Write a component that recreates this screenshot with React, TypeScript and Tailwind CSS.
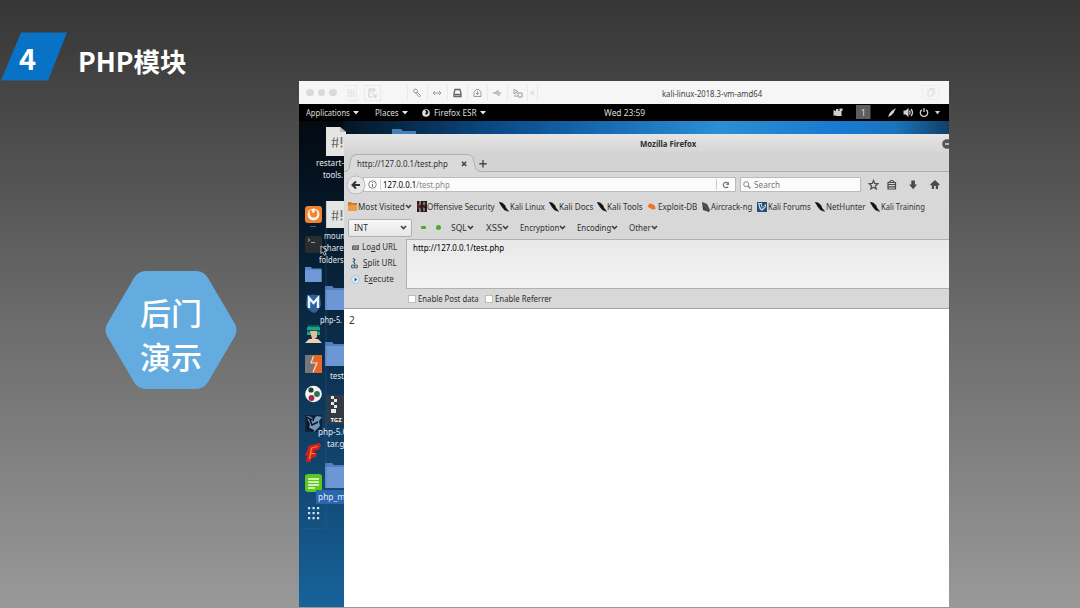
import { useLayoutEffect, useRef, type ReactNode } from "react";

/** Text that is squeezed or stretched to the width of its own box. */
function Fit({ className = "", children }: { className?: string; children: ReactNode }) {
  const outer = useRef<HTMLSpanElement>(null);
  const inner = useRef<HTMLSpanElement>(null);
  useLayoutEffect(() => {
    const fit = () => {
      if (!outer.current || !inner.current) return;
      const ratio = outer.current.clientWidth / inner.current.offsetWidth;
      inner.current.style.transform = `scaleX(${ratio})`;
    };
    fit();
    document.fonts?.ready.then(fit);
  }, []);
  return (
    <span ref={outer} className={`block shrink-0 whitespace-nowrap ${className}`}>
      <span ref={inner} className="inline-block origin-left">
        {children}
      </span>
    </span>
  );
}

function Caret() {
  return (
    <svg className="ml-[3px] h-[4px] w-[6px] shrink-0" viewBox="0 0 6 4">
      <path d="M0 0h6L3 3.600z" fill="#e4e4e4" />
    </svg>
  );
}

function Chevron() {
  return (
    <svg className="h-[5px] w-[7px] shrink-0" viewBox="0 0 7 5">
      <path d="M1 1l2.500 2.600L6 1" fill="none" stroke="#3c3c3c" strokeWidth="1.500" />
    </svg>
  );
}

function VmTitleBar() {
  return (
    <div className="flex h-[23px] shrink-0 items-center bg-[#f6f6f6]">
      <div className="ml-[7px] flex gap-[4px]">
        <i className="size-[7.500px] rounded-full bg-[#dadada]" />
        <i className="size-[7.500px] rounded-full bg-[#dadada]" />
        <i className="size-[7.500px] rounded-full bg-[#dadada]" />
      </div>
      <svg className="ml-[9.500px] h-[18px] w-[200px] shrink-0" viewBox="347 84 200 18" fill="none" stroke="#9a9a9a" strokeWidth="1">
        <g stroke="#eaeaea">
          <path d="M347 85.500h10.500v15H347M365.500 85.500h16v15h-16z" />
          <path d="M408.500 85v16M428.500 85v16M448.500 85v16M468.500 85v16M488.500 85v16M508.500 85v16M528.500 85v16M538.500 85v16" />
        </g>
        <path d="M349 90h6v6h-6zM352 90v6M349 93h6" stroke="#e2e2e2" />
        <path d="M376 90v-1h-6v8h3M371 91h5M373 93l4 4M377 94v3h-3" stroke="#cfcfcf" />
        <path d="M415 89.500l2-.5 1.500 1.500-.5 2-2 .5-1.500-1.500zM418 92l3.500 3.500-1 1.500-4-4" />
        <path d="M434 93h8M436 91l-2 2 2 2M440 91l2 2-2 2" />
        <path d="M455 93.500l1-4h5l1 4v3h-7zM455 94.500h7" stroke="#666" strokeWidth="1.300" />
        <path d="M475 96.500v-4l2-3h3l2 3v4zM477 93.500h3M478.500 91v4M475 96.500h7" />
        <path d="M494 93h8M496 93l2-2h2M498 93l1 2h2" />
        <path d="M515 89.500l4 2.200-4 2.200zM519 93h4v4h-4zM515 96h3" />
        <path d="M535 91l-3 2 3 2" stroke="#cfcfcf" />
      </svg>
      <Fit className="ml-[116px] w-[100px] pt-[2px] font-['Noto_Sans'] text-[9px] leading-[12px] text-[#404040]">
        kali-linux-2018.3-vm-amd64
      </Fit>
      <svg className="ml-[160px] h-[15px] w-[17px] shrink-0" viewBox="0 0 17 15" fill="none">
        <rect x=".5" y=".5" width="16" height="14" rx="1" stroke="#eeeeee" />
        <path d="M6 5h5v6H6zM8 5V3.500h4.500V9" stroke="#dedede" />
      </svg>
    </div>
  );
}

function DesktopPanel() {
  return (
    <div className="flex h-[17px] shrink-0 items-center bg-black font-['Noto_Sans'] text-[9px] leading-[13px] text-[#dcdcdc]">
      <Fit className="ml-[7px] w-[44px]">Applications</Fit>
      <Caret />
      <Fit className="ml-[16px] w-[24px]">Places</Fit>
      <Caret />
      <svg className="ml-[14px] size-[8px] shrink-0" viewBox="0 0 8 8">
        <circle cx="4" cy="4" r="3.800" fill="#dcdcdc" />
        <path d="M3 1c3-.4 4 2 2.600 3.700S2.800 5.300 3.400 4.200L4.200 3z" fill="#111" />
      </svg>
      <Fit className="ml-[4px] w-[43px]">Firefox ESR</Fit>
      <Caret />
      <Fit className="ml-[118px] w-[41px]">Wed 23:59</Fit>
      <svg className="ml-[187px] h-[15px] w-[110px] shrink-0" viewBox="832 105 110 15">
        <g fill="#d0d0d0">
          <path d="M833.500 110l2 1h6v5h-6v-1l-2 1zM836 109h2.500v2H836zM839.500 108.500h3v2.500h-3z" />
          <path d="M888 117l1.500-3.500 2-2.500 4.500-3-2.500 5-2.500 2.500z" />
          <path d="M903.500 110.500h2l3-2.500v9l-3-2.500h-2z" />
          <path d="M935 111h5l-2.500 3.500z" />
        </g>
        <rect x="856" y="105" width="14.500" height="14" fill="#5d5d5d" />
        <path d="M909.500 110.500q1.500 2 0 4M911 109q3 3.500 0 7" fill="none" stroke="#d0d0d0" strokeWidth="1.300" />
        <path d="M921.800 109.800a3.700 3.700 0 1 0 4.400 0M924 108v4" fill="none" stroke="#d0d0d0" strokeWidth="1.300" />
        <text x="863.300" y="115.500" textAnchor="middle" fill="#d8d8d8" fontSize="9" fontFamily="Noto Sans">1</text>
      </svg>
    </div>
  );
}

function Dock() {
  return (
    <svg className="absolute left-0 top-[80px] h-[328px] w-[28px]" viewBox="299 201 28 328">
      <path d="M299 528.500h27v-327" fill="none" stroke="#2e5f8c" opacity=".4" />
      <rect x="305" y="206" width="17" height="17" rx="3" fill="#ee8331" />
      <circle cx="313.500" cy="214.500" r="6" fill="#fff1df" />
      <path d="M309.500 211.500q1-2 2-2 0 3.500 2.500 3.500l1.500-3.500q3.500 4 .5 7.500-3.500 1.500-5.500-1z" fill="#ee8331" />
      <path d="M310 226.500h6" stroke="#4c6074" />
      <rect x="305" y="236" width="17" height="17" rx="2" fill="#292d2f" />
      <path d="M308 238.500l2 1.500-2 1.500M311 242.500h4" fill="none" stroke="#b8b8b8" strokeWidth=".8" />
      <path d="M305 267h6l1 1.500h9.500V282H305z" fill="#5d86c4" />
      <path d="M305 270h16.500v12H305z" fill="#6f98d6" />
      <path d="M307 296q6-3 13 0l1 9q-3 7-7 8-6-2-8-8z" fill="#315f9c" />
      <path d="M309 308v-10l4.500 5 4.500-5v10" fill="none" stroke="#eef4ff" strokeWidth="2.400" />
      <path d="M307 328l2-3h9l2 3v7h-13z" fill="#1ba391" />
      <path d="M307 331h13M309 326l9 0" stroke="#0c493f" strokeWidth="1.500" />
      <path d="M310 331h7v6l-2 2h-3z" fill="#e8bb94" />
      <path d="M305 343l4-4h9l4 4z" fill="#ead2b4" />
      <rect x="305" y="355" width="17" height="18" fill="#e7672a" />
      <path d="M305 355h9l-2.500 8h4l-3.500 10h-7z" fill="#77767a" />
      <path d="M313.500 356l-2.500 7h6l-4 9" fill="none" stroke="#ffd9bf" strokeWidth="1.200" />
      <circle cx="313.500" cy="394" r="8.300" fill="#f4f4f0" />
      <circle cx="311" cy="390" r="2.600" fill="#253e39" />
      <circle cx="317" cy="394" r="2.900" fill="#306e58" />
      <circle cx="311.500" cy="398" r="2.900" fill="#a62a40" />
      <rect x="305" y="415" width="17" height="17" fill="#0f2236" />
      <path d="M306 416q5 0 7 3l4-3 5 1-3 4 1 5-6 6-5-4 1-4z" fill="#7097bb" />
      <path d="M306 417l6 3M310 420l2 5 6-3M308 422v6l6 3M314 417l-1 4" fill="none" stroke="#08111d" strokeWidth="1.500" />
      <path d="M308 446l11-3 2 2-2 4.500-4 1-1 2.500h3l-1 4-4 1-2 4h-4l1-6-2-1 2-4 1-2z" fill="#d31f24" />
      <path d="M311.500 448l6-1.500M311.500 448l-2 11M311 453.500h4" stroke="#f58d27" strokeWidth="1.200" />
      <rect x="305" y="474" width="17" height="18" rx="3" fill="#5fc51f" />
      <path d="M308 479h11M308 482h11M308 485h11M308 488h7" stroke="#f0ffe1" strokeWidth="1.300" />
      <g fill="#cfe3f2">
        <path d="M308 507h2.200v2.200H308zM312.500 507h2.200v2.200h-2.200zM317 507h2.200v2.200H317zM308 512h2.200v2.200H308zM312.500 512h2.200v2.200h-2.200zM317 512h2.200v2.200H317zM308 517h2.200v2.200H308zM312.500 517h2.200v2.200h-2.200zM317 517h2.200v2.200H317z" />
      </g>
    </svg>
  );
}

function DesktopIcons() {
  return (
    <>
      <svg className="absolute left-[24px] top-0 h-[380px] w-[96px]" viewBox="323 121 96 380">
        <path d="M392 129h9l2 2h13v6h-24z" fill="#477fb9" />
        <path d="M326 127h14l6 5v24h-20zM326 201h20v27h-20z" fill="#e5e5e3" />
        <path d="M340 127v5h6z" fill="#bbb" />
        <path d="M331.500 140.500h7M331.500 144.500h7M334 137.500l-1 10M337.500 137.500l-1 10M331.500 213.500h7M331.500 217.500h7M334 210.500l-1 10M337.500 210.500l-1 10" stroke="#777" strokeWidth="1.200" />
        <path d="M341.500 137v7M341.500 145.500v2M341.500 210v7M341.500 218.500v2" stroke="#777" strokeWidth="1.700" />
        <path d="M325 286h7l2 2h12v22h-21zM325 342h7l2 2h12v22h-21zM325 463h7l2 2h12v23h-21z" fill="#527fbd" />
        <path d="M325 290h21v20h-21zM325 346h21v20h-21zM325 467h21v21h-21z" fill="#6c96d4" />
        <rect x="327" y="395" width="19" height="29" fill="#343a43" />
        <path d="M331 396h3v3h-3zM334 399h3v3h-3zM331 402h3v3h-3zM334 405h3v3h-3zM331 409h5v4h-5z" fill="#e8e8e8" />
        <text x="330.500" y="422" fill="#fff" fontSize="6" fontWeight="bold" fontFamily="Noto Sans">TGZ</text>
      </svg>
      <div className="font-['Noto_Sans'] text-[9px] leading-[12px] text-[#e4e9ed]">
        <Fit className="absolute left-[17px] top-[36px] w-[28px]">restart-</Fit>
        <Fit className="absolute left-[24px] top-[48px] w-[20px]">tools.</Fit>
        <Fit className="absolute left-[25px] top-[109px] w-[21px]">moun</Fit>
      </div>
    </>
  );
}

function DesktopLabels() {
  return (
    <div className="font-['Noto_Sans'] text-[9px] leading-[12px] text-[#e4e9ed]">
      <Fit className="absolute left-[24px] top-[121px] w-[21px]">share</Fit>
      <Fit className="absolute left-[20px] top-[133px] w-[25px]">folders</Fit>
      <Fit className="absolute left-[21px] top-[193px] w-[22px]">php-5.</Fit>
      <Fit className="absolute left-[31px] top-[249px] w-[14px]">test</Fit>
      <Fit className="absolute left-[19px] top-[305px] w-[29px]">php-5.6</Fit>
      <Fit className="absolute left-[28px] top-[317px] w-[18px]">tar.g</Fit>
      <div className="absolute left-[17px] top-[369px] h-[14px] w-[30px] bg-[#2b66b0] pl-[2px] pt-px">
        <Fit className="w-[27px]">php_m</Fit>
      </div>
      <svg className="absolute left-[21px] top-[124px] h-[12px] w-[8px]" viewBox="0 0 9 14">
        <path d="M1 1v9l2-2 2 4 2-1-2-4h3z" fill="#111" stroke="#eee" strokeWidth=".9" />
      </svg>
    </div>
  );
}

function TabStrip() {
  return (
    <div className="relative h-[19px] shrink-0">
      <svg className="absolute inset-0 h-[19px] w-[605px]" viewBox="344 153 605 19">
        <path d="M344 171.500q5 0 5-5l1-6q1-6 7-6h109q6 0 7 5l2 7q1 5 6 5h469V172H344z" fill="#dadada" />
        <path d="M344 171.500q5 0 5.500-5l1-6q1-6 7-6h109q6 0 7 5l1.500 7q1 5 6 5h468" fill="none" stroke="#aeaeae" />
        <path d="M462 161.700l4.200 4.200M466.200 161.700l-4.200 4.200" stroke="#444" strokeWidth="1.500" />
        <path d="M479.300 163.700h7.400M483 160v7.400" stroke="#444" strokeWidth="1.400" />
      </svg>
      <div className="relative flex h-[19px] items-center pl-[13px] pt-[2px]">
        <Fit className="w-[91px] text-[9.500px] leading-[13px]">http://127.0.0.1/test.php</Fit>
      </div>
    </div>
  );
}

function NavBar() {
  return (
    <div className="flex h-[25px] shrink-0 items-center">
      <svg className="z-10 ml-[2px] size-[20px] shrink-0" viewBox="0 0 20 20">
        <circle cx="10" cy="10" r="9" fill="#e7e7e7" stroke="#bcbcbc" />
        <path d="M14 10H7M10 6.500L6.500 10l3.500 3.500" fill="none" stroke="#333" strokeWidth="2" />
      </svg>
      <div className="-ml-[3px] flex h-[15px] w-[373px] shrink-0 items-center border border-[#bcbcbc] bg-[#fbfbfb]">
        <svg className="ml-[4px] size-[9px] shrink-0" viewBox="0 0 9 9" fill="none" stroke="#777">
          <circle cx="4.500" cy="4.500" r="3.800" strokeWidth=".9" />
          <path d="M4.500 4v3M4.500 2v1" strokeWidth="1.100" />
        </svg>
        <i className="ml-[3px] h-[11px] w-px bg-[#d5d5d5]" />
        <Fit className="ml-[2px] w-[67px] text-[9.500px] leading-[13px]">
          <span className="text-black">127.0.0.1</span>
          <span className="text-[#888]">/test.php</span>
        </Fit>
        <div className="ml-auto flex h-[11px] w-[19px] items-center justify-center border-l border-[#ccc]">
          <svg className="size-[8px]" viewBox="0 0 8 8">
            <path d="M6.200 5.600a2.700 2.700 0 1 1-.1-3.300" fill="none" stroke="#777" strokeWidth="1.200" />
            <path d="M7 .8v3.200H3.800z" fill="#777" />
          </svg>
        </div>
      </div>
      <div className="ml-[4px] flex h-[15px] w-[121px] shrink-0 items-center border border-[#bcbcbc] bg-[#fbfbfb]">
        <svg className="ml-[2px] size-[8px]" viewBox="0 0 8 8" fill="none" stroke="#888">
          <circle cx="3.200" cy="3.200" r="2.500" />
          <path d="M5 5l2.500 2.500" strokeWidth="1.400" />
        </svg>
        <Fit className="ml-[3px] w-[26px] text-[9.500px] leading-[13px] text-[#777]">Search</Fit>
      </div>
      <svg className="ml-[7px] h-[12px] w-[74px] shrink-0" viewBox="868 179 74 12">
        <path d="M873.500 180.500l1.200 2.900 3.200.3-2.400 2.100.7 3.100-2.700-1.700-2.700 1.700.7-3.100-2.400-2.100 3.200-.3z" fill="none" stroke="#4a4a4a" strokeWidth="1.200" />
        <path d="M888 182.500h7.500v6.500H888zM888 184.500h8M888 186.800h8M889.500 182.500q0-2 2.200-2t2.200 2" fill="none" stroke="#4a4a4a" strokeWidth="1.200" />
        <path d="M911.300 180.500h3.600v4h2.200l-4 4.800-4-4.800h2.200z" fill="#4a4a4a" />
        <path d="M935 180l4.800 4.600-1 .9-.8-.6v4.100h-2.200v-3h-1.800v3h-2.200v-4.100l-.8.6-1-.9z" fill="#4a4a4a" />
      </svg>
    </div>
  );
}

function KaliMark() {
  return (
    <svg className="h-[10px] w-[10px] shrink-0" viewBox="0 0 10 10">
      <path d="M0 0l3.500 1 2.500 2.500 1 2.500 2.800 3.500L5.500 8 3 5z" fill="#111" stroke="#111" strokeWidth=".4" />
    </svg>
  );
}

function Bookmarks() {
  return (
    <div className="flex h-[20px] shrink-0 items-center pb-px text-[9.500px] leading-[13px]">
      <svg className="ml-[4px] h-[9px] w-[9px] shrink-0" viewBox="0 0 9 9">
        <path d="M0 0h3l1 1h5v8H0z" fill="#d07a2b" />
        <path d="M0 4l3-1h6v6H0z" fill="#f19a43" />
      </svg>
      <Fit className="ml-px w-[47px]">Most Visited</Fit>
      <Chevron />
      <svg className="ml-[5px] h-[11px] w-[10px] shrink-0" viewBox="0 0 10 11">
        <rect width="10" height="11" fill="#201b1c" />
        <path d="M3 0v4M7 1v3M3 7v4M7 7v3" stroke="#c5b4b2" strokeWidth="1.200" />
        <path d="M1 8V3l3 5M6 7l3-5" stroke="#79333b" fill="none" />
      </svg>
      <Fit className="w-[68px]">Offensive Security</Fit>
      <i className="w-[4px] shrink-0" />
      <KaliMark />
      <Fit className="ml-px w-[35px]">Kali Linux</Fit>
      <i className="w-[4px] shrink-0" />
      <KaliMark />
      <Fit className="w-[34px]">Kali Docs</Fit>
      <i className="w-[4px] shrink-0" />
      <KaliMark />
      <Fit className="w-[36px]">Kali Tools</Fit>
      <svg className="ml-[4px] h-[9px] w-[10px] shrink-0" viewBox="0 0 10 9">
        <path d="M1.500 3l1-1.500 3 .5 2.500 2 .5 3-3 .5-3-1.500-2-1.500z" fill="#ed742a" />
      </svg>
      <Fit className="ml-px w-[39px]">Exploit-DB</Fit>
      <svg className="ml-[5px] h-[10px] w-[9px] shrink-0" viewBox="0 0 9 10">
        <path d="M0 0l5 2 3 6-1 2-6-2z" fill="#444" />
        <path d="M2 2l4 6" stroke="#666" />
      </svg>
      <Fit className="w-[41px]">Aircrack-ng</Fit>
      <svg className="ml-[5px] h-[10px] w-[10px] shrink-0" viewBox="0 0 10 10">
        <rect width="10" height="10" fill="#244e79" />
        <path d="M1 1h4v4l4-3v3L5 9 2.500 7z" fill="#c9dbea" />
        <path d="M3 2l1.500 4.500L8 4" fill="none" stroke="#1b3756" />
      </svg>
      <Fit className="ml-px w-[43px]">Kali Forums</Fit>
      <i className="w-[4px] shrink-0" />
      <KaliMark />
      <Fit className="ml-px w-[40px]">NetHunter</Fit>
      <i className="w-[4px] shrink-0" />
      <KaliMark />
      <Fit className="ml-px w-[44px]">Kali Training</Fit>
    </div>
  );
}

function HackMenu() {
  return (
    <div className="flex h-[22px] shrink-0 items-center pb-px text-[9px] leading-[13px]">
      <div className="ml-[4px] flex h-[18px] w-[64px] shrink-0 items-center justify-between rounded-[2px] border border-[#b0b0b0] bg-linear-to-b from-[#f8f8f8] to-[#e6e6e6] pl-[5px] pr-[4px]">
        <Fit className="w-[14px]">INT</Fit>
        <Chevron />
      </div>
      <i className="ml-[9px] h-[3px] w-[5px] shrink-0 rounded-[1px] bg-[#51a72e]" />
      <i className="ml-[10px] size-[5px] shrink-0 rounded-full bg-[#51a72e]" />
      <Fit className="ml-[10px] w-[16px]">SQL</Fit>
      <Chevron />
      <Fit className="ml-[12px] w-[16px]">XSS</Fit>
      <Chevron />
      <Fit className="ml-[11px] w-[39px]">Encryption</Fit>
      <Chevron />
      <Fit className="ml-[11px] w-[34px]">Encoding</Fit>
      <Chevron />
      <Fit className="ml-[11px] w-[22px]">Other</Fit>
      <Chevron />
    </div>
  );
}

function HackBody() {
  return (
    <div className="flex h-[70px] shrink-0 border-b border-[#a4a4a4]">
      <div className="flex w-[62px] shrink-0 flex-col text-[9.500px] leading-[16px]">
        <div className="flex h-[16px] items-center">
          <svg className="ml-[7px] h-[8px] w-[9px]" viewBox="0 0 9 8">
            <path d="M1 3l2-1h5v5H1z" fill="#666" />
            <path d="M2 5h5M3 3h4" stroke="#bbb" strokeWidth=".8" />
          </svg>
          <Fit className="ml-[2px] w-[35px]">Lo<u>a</u>d URL</Fit>
        </div>
        <div className="flex h-[16px] items-center">
          <svg className="ml-[7px] h-[11px] w-[7px]" viewBox="0 0 7 11" fill="none" stroke="#456072" strokeWidth="1.200">
            <path d="M2 0l2 2-2 2M3.500 4v2.500" />
            <circle cx="2" cy="8.500" r="1.500" />
            <circle cx="5" cy="8.500" r="1.500" />
          </svg>
          <Fit className="ml-[5px] w-[34px]"><u>S</u>plit URL</Fit>
        </div>
        <div className="flex h-[16px] items-center">
          <svg className="ml-[7px] size-[9px]" viewBox="0 0 9 9">
            <circle cx="4.500" cy="4.500" r="4" fill="#dceefa" stroke="#9cbcd2" strokeWidth=".8" />
            <path d="M3.500 2.500l3 2-3 2z" fill="#2e6a9d" />
          </svg>
          <Fit className="ml-[4px] w-[30px]">E<u>x</u>ecute</Fit>
        </div>
      </div>
      <div className="flex min-w-0 flex-1 flex-col">
        <div className="h-[50px] border border-r-0 border-[#b0b0b0] bg-linear-to-b from-[#e9e9e9] to-[#f3f3f3] pl-[6px] pt-px">
          <Fit className="w-[91px] text-[9px] leading-[13px] text-black">http://127.0.0.1/test.php</Fit>
        </div>
        <div className="flex h-[18px] items-center pl-[2px] pt-px text-[9px] leading-[13px]">
          <i className="size-[8px] shrink-0 border border-[#bdbdbd] bg-white" />
          <Fit className="ml-[2px] w-[61px]">Enable Post data</Fit>
          <i className="ml-[6px] size-[8px] shrink-0 border border-[#bdbdbd] bg-white" />
          <Fit className="ml-[2px] w-[57px]">Enable Referrer</Fit>
        </div>
      </div>
    </div>
  );
}

function FirefoxWindow() {
  return (
    <div className="absolute bottom-0 left-[45px] right-0 top-[13px] flex flex-col overflow-hidden rounded-tl-[4px] bg-[#d8d8d8] font-['Noto_Sans'] text-[#303030]">
      <div className="flex h-[19px] shrink-0 items-center bg-linear-to-b from-[#e5e5e5] to-[#d5d5d5]">
        <Fit className="ml-[296px] w-[56px] text-[9px] font-bold leading-[13px]">Mozilla Firefox</Fit>
        <svg className="ml-[246px] size-[10px] shrink-0" viewBox="0 0 10 10">
          <circle cx="5" cy="5" r="4.800" fill="#555" />
          <path d="M3 5h6" stroke="#ddd" strokeWidth="1.300" />
        </svg>
      </div>
      <div className="bg-[#d3d3d3]">
        <TabStrip />
      </div>
      <NavBar />
      <Bookmarks />
      <HackMenu />
      <HackBody />
      <div className="min-h-0 flex-1 bg-white pl-[5px] pt-[4px] text-[10px] leading-[14px] text-[#333]">2</div>
    </div>
  );
}

export default function App() {
  return (
    <div className="flex h-[608px] w-[1080px] overflow-hidden bg-linear-to-b from-[#363636] via-[#696969] via-50% to-[#999999]">
      <div className="w-[299px] shrink-0 font-['Noto_Sans_CJK_SC',sans-serif] text-white">
        <header className="flex h-[81px] items-end">
          <div className="relative h-[49px] w-[67px] shrink-0">
            <svg className="absolute inset-0" width="67" height="49" viewBox="0 0 67 49">
              <path d="M21 .5h46L48 48.500H1z" fill="#0872c7" />
            </svg>
            <Fit className="relative ml-[19px] w-[17px] pt-[3px] text-[29px] font-bold leading-[44px]">4</Fit>
          </div>
          <h1 className="ml-[11px] text-[26.500px] font-bold leading-[40px]">
            <Fit className="w-[108px]">PHP模块</Fit>
          </h1>
        </header>
        <div className="relative ml-[105px] mt-[189px] flex h-[120px] w-[132px] items-center justify-center">
          <svg className="absolute inset-0" width="132" height="120" viewBox="0 0 132 120">
            <path d="M41 1h50q8 0 12 7l27 46q3 6 0 12l-27 46q-4 7-12 7H41q-8 0-12-7L2 66q-3-6 0-12L29 8q4-7 12-7z" fill="#64abe0" />
          </svg>
          <p className="relative pt-[8px] text-center text-[31px] font-medium leading-[44px]">
            后门
            <br />
            演示
          </p>
        </div>
      </div>
      <main className="mt-[81px] flex h-[526px] w-[650px] shrink-0 flex-col overflow-hidden bg-black">
        <VmTitleBar />
        <DesktopPanel />
        <div className="relative min-h-0 flex-1 bg-linear-to-b from-[#030a12] via-[#0c304f] via-50% to-[#17639c]">
          <div className="ml-[45px] h-[14px] bg-[linear-gradient(90deg,#051525_0%,#0a4a86_25%,#1565ad_40%,#2b8fd3_62%,#1779d0_83%,#1b75bd_91%,#123f66_100%)]" />
          <DesktopIcons />
          <Dock />
          <DesktopLabels />
          <FirefoxWindow />
        </div>
      </main>
    </div>
  );
}
